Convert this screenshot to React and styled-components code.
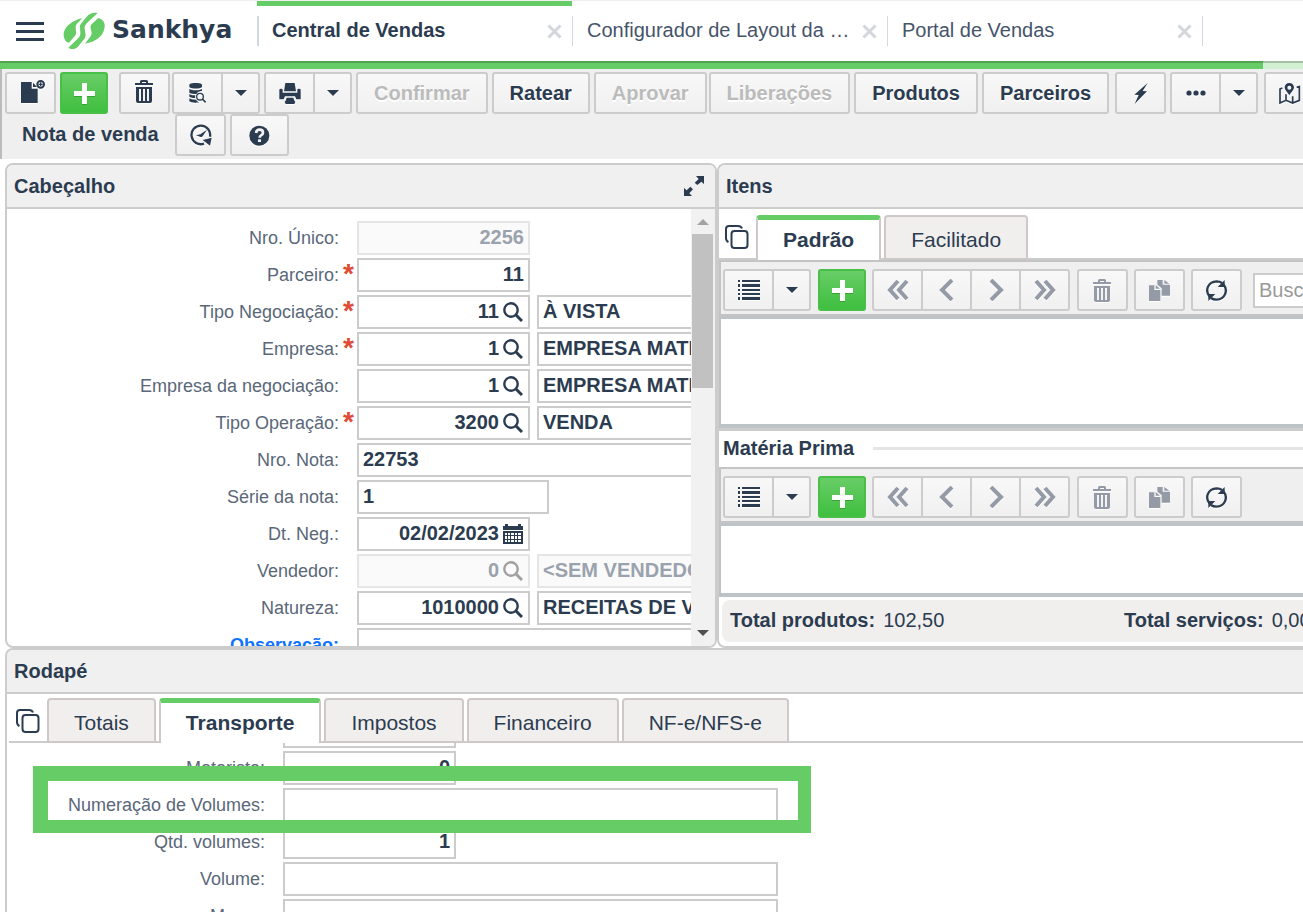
import React, { useState } from 'react';
import styled, { createGlobalStyle, css } from 'styled-components';

const GlobalStyle = createGlobalStyle`
  * {
    box-sizing: border-box;
  }

  body {
    margin: 0;
    background: #fff;
    color: #2c3c50;
    font-family: 'Liberation Sans', Arial, sans-serif;
    font-size: 20px;
    overflow: hidden;
  }

  button,
  input {
    font: inherit;
    color: inherit;
  }
`;

const Page = styled.div`
  display: flex;
  flex-direction: column;
  height: 100vh;
  overflow: hidden;
`;

/* ---------- top bar ---------- */

const TopBar = styled.header`
  display: flex;
  align-items: flex-start;
  height: 61px;
  border-top: 1px solid #f0f0f0;
`;

const Brand = styled.div`
  display: flex;
  align-items: center;
  flex: none;
  width: 257px;
  height: 60px;
  padding-left: 16px;
`;

const MenuButton = styled.button`
  display: flex;
  padding: 0;
  margin-right: 19px;
  border: 0;
  background: none;
`;

const LogoText = styled.span`
  margin: 0 0 2px 7px;
  font-family: 'DejaVu Sans', sans-serif;
  font-size: 25px;
  font-weight: bold;
  line-height: 30px;
`;

const WindowTab = styled.div`
  display: flex;
  align-items: center;
  flex: none;
  width: 315px;
  height: 60px;
  border-top: 5px solid ${({ $active }) => ($active ? '#66cc66' : 'transparent')};
  padding-bottom: 5px;
`;

const WindowTabInner = styled.div`
  display: flex;
  align-items: center;
  justify-content: space-between;
  flex: 1;
  height: 30px;
  padding: 0 10px 0 ${({ $active }) => ($active ? 13 : 14)}px;
  border-left: ${({ $active }) => ($active ? 2 : 1)}px solid #d2d7e2;
`;

const WindowTabLink = styled.a`
  margin-bottom: 2px;
  color: ${({ $active }) => ($active ? '#2c3c50' : '#46546a')};
  font-weight: ${({ $active }) => ($active ? 'bold' : 'normal')};
  line-height: 24px;
  text-decoration: none;
  white-space: nowrap;
`;

const CloseButton = styled.button`
  display: flex;
  padding: 0;
  border: 0;
  background: none;
`;

const TabsEnd = styled.div`
  width: 1px;
  height: 30px;
  margin-top: 15px;
  background: #d2d7e2;
`;

const ProgressTrack = styled.div`
  display: flex;
  flex: none;
  height: 8px;
  padding-right: 40px;
  border-top: 2px solid #a7c0a7;
  background: #d1f0d1;
`;

const ProgressFill = styled.div`
  flex: 1;
  margin-top: -2px;
  border-top: 2px solid #53a353;
  background: #66cc66;
`;

/* ---------- buttons ---------- */

const Button = styled.button`
  display: flex;
  align-items: center;
  justify-content: center;
  flex: none;
  min-width: ${({ $size }) => (({ icon: 51, add: 48, help: 59, caret: 39 })[$size] || 0)}px;
  height: 42px;
  margin: 0 ${({ $after = 4 }) => $after}px 0 0;
  padding: ${({ $size }) => ($size ? '0' : '0 16px')};
  border: 2px solid #ccc;
  border-radius: 3px;
  background: linear-gradient(#f8f8f8, #f0f0f0);
  color: #2c3c50;
  font-weight: bold;
  text-shadow: 0 2px 0 #fff;
  white-space: nowrap;

  svg {
    filter: drop-shadow(0 1px 0 #fff);
  }

  &:disabled {
    color: ${({ $size }) => ($size ? '#949ba6' : '#bbb')};
  }

  ${({ $size }) =>
    $size === 'add' &&
    css`
      border-color: #48c048;
      background: linear-gradient(#68cd67, #3fbf3f);
      color: #fff;

      svg {
        filter: drop-shadow(0 1px 0 #37a337);
      }
    `}
`;

const ButtonGroup = styled.div`
  display: flex;
  flex: none;
  margin-right: ${({ $after = 4 }) => $after}px;

  ${Button} {
    margin-right: 0;
  }

  ${Button} + ${Button} {
    margin-left: -2px;
    border-top-left-radius: 0;
    border-bottom-left-radius: 0;
  }
`;

const MainToolbar = styled.div`
  flex: none;
  height: 90px;
  margin-bottom: 4px;
  padding: 3px 0 0 3px;
  border-left: 2px solid #bbb;
  background: #efefef;
  overflow: hidden;
`;

const ToolbarLine = styled.div`
  display: flex;
  align-items: center;
`;

const DocumentKind = styled.h1`
  width: 170px;
  margin: 0;
  padding: 0 0 2px 17px;
  font-size: 20px;
  line-height: 24px;
`;

/* ---------- panels ---------- */

const Workspace = styled.main`
  display: grid;
  grid-template-columns: minmax(0, 356fr) minmax(0, 293fr);
  grid-template-rows: minmax(0, 485fr) minmax(0, 264fr);
  flex: 1;
  min-height: 0;
  padding-left: 5px;
`;

const Panel = styled.section`
  display: flex;
  flex-direction: column;
  min-width: 0;
  border: 2px solid #ccc;
  border-radius: 8px;
  overflow: hidden;

  ${({ $open }) =>
    $open &&
    css`
      border-right: 0;
      border-top-right-radius: 0;
      border-bottom-right-radius: 0;
    `}

  ${({ $wide }) =>
    $wide &&
    css`
      grid-column: 1 / -1;
      border-bottom: 0;
      border-bottom-left-radius: 0;
    `}
`;

const PanelHeader = styled.div`
  display: flex;
  align-items: center;
  justify-content: space-between;
  flex: none;
  height: 44px;
  padding: 0 11px 0 7px;
  border-bottom: 2px solid #ccc;
  background: #f0f0f0;
`;

const PanelTitle = styled.h2`
  margin: 0;
  font-size: 20px;
  line-height: 24px;
`;

const PlainButton = styled.button`
  display: flex;
  padding: 0;
  border: 0;
  background: none;
`;

const PanelBody = styled.div`
  display: flex;
  flex: 1;
  min-height: 0;
`;

/* ---------- forms ---------- */

const Form = styled.form`
  flex: 1;
  min-width: 0;
  padding-top: ${({ $top }) => $top}px;
  overflow: hidden;
`;

const ScrolledRows = styled.div`
  margin-top: -29px;
`;

const Row = styled.div`
  position: relative;
  display: flex;
  align-items: center;
  height: 34px;
  margin-bottom: 3px;
`;

const Label = styled.label`
  flex: none;
  width: ${({ $width }) => $width}px;
  color: ${({ $link }) => ($link ? '#0f73ff' : '#5a6779')};
  font-size: 18px;
  font-weight: ${({ $link }) => ($link ? 'bold' : 'normal')};
  line-height: 22px;
  text-align: right;
  white-space: nowrap;
`;

const EmptyLabel = styled.span`
  flex: none;
  width: 276px;
`;

const Mark = styled.span`
  flex: none;
  width: 18px;
  height: 34px;
  padding-left: 4px;
  color: #e04b35;
  font-size: 28px;
  font-weight: bold;
  line-height: 32px;
`;

const widths = { short: 173, medium: 192, long: 495, text: 400 };

const Box = styled.div`
  display: flex;
  align-items: center;
  flex: none;
  width: ${({ $size }) => widths[$size]}px;
  height: 34px;
  margin-right: 7px;
  padding: 0 4px;
  border: 2px solid ${({ $off }) => ($off ? '#e5e5e5' : '#ccc')};
  background: ${({ $off }) => ($off ? '#fafafa' : '#fff')};
  color: ${({ $off }) => ($off ? '#9aa2ad' : '#2c3c50')};
`;

const Value = styled.input`
  flex: 1;
  min-width: 0;
  height: 26px;
  margin-bottom: 2px;
  padding: 0;
  border: 0;
  outline: 0;
  background: none;
  font-weight: bold;
  text-align: ${({ $right }) => ($right ? 'right' : 'left')};
`;

const BoxButton = styled(PlainButton)`
  margin: 0 1px 0 4px;
  color: ${({ disabled }) => (disabled ? '#a0a0a0' : '#2c3c50')};
`;

const Highlight = styled.div`
  position: absolute;
  z-index: 1;
  top: -22px;
  left: 26px;
  width: 778px;
  height: 67px;
  border: solid #66cc66;
  border-width: 15px 13px 13px 15px;
  pointer-events: none;
`;

const Scrollbar = styled.div`
  display: flex;
  flex-direction: column;
  align-items: center;
  flex: none;
  width: 24px;
  padding: 10px 1px 10px 0;
  background: #f1f1f1;
`;

const ScrollThumb = styled.div`
  flex: none;
  width: 21px;
  height: 37%;
  margin: 9px 0 auto;
  background: #c1c1c1;
`;

/* ---------- tabs ---------- */

const TabBar = styled.div`
  display: flex;
  align-items: center;
  flex: none;
  height: ${({ $height }) => $height}px;
  margin-left: ${({ $inset = 0 }) => $inset}px;
  padding-left: ${({ $start }) => $start}px;
  box-shadow: inset 0 -2px 0 #ccc;
`;

const Tab = styled.button`
  align-self: flex-end;
  height: 45px;
  margin: 0 3px 0 0;
  padding: 5px 25px 0;
  border: 2px solid #cfc8c8;
  border-radius: 4px 4px 0 0;
  background: #f1efee;
  font-size: 21px;
  white-space: nowrap;

  ${({ $active }) =>
    $active &&
    css`
      padding-top: 0;
      border-top: 5px solid #66cc66;
      border-bottom: 0;
      background: #fff;
      font-weight: bold;
    `}
`;

const TabsIcon = styled(PlainButton)`
  margin: 4px 7px 0 0;
`;

/* ---------- items ---------- */

const GridToolbar = styled.div`
  display: flex;
  align-items: center;
  flex: none;
  height: 56px;
  padding: 4px 0 0 2px;
  border: solid #c4c4c4;
  border-width: 2px 0 2px 2px;
  background: #efefef;
  overflow: hidden;
`;

const GridArea = styled.div`
  flex: 1 1 ${({ $basis }) => $basis}px;
  border: solid #bdc3c7;
  border-width: 3px 0 4px 2px;
  background: #fff;
`;

const Search = styled.input`
  flex: none;
  width: 200px;
  height: 35px;
  margin-left: 7px;
  padding: 0 4px;
  border: 2px solid #ccc;
  background: #fff;

  &::placeholder {
    color: #999;
    opacity: 1;
  }
`;

const Legend = styled.div`
  display: flex;
  align-items: center;
  flex: none;
  gap: 19px;
  height: 39px;
  padding: 0 0 2px 4px;
  border-top: 3px solid #ccc;
`;

const LegendTitle = styled.h3`
  margin: 0;
  font-size: 20px;
  line-height: 24px;
`;

const LegendRule = styled.div`
  flex: 1;
  height: 3px;
  background: #e5e5e5;
`;

const Totals = styled.dl`
  display: flex;
  align-items: center;
  flex: none;
  height: 42px;
  margin: 3px 0 4px 3px;
  padding: 0 0 2px 8px;
  border-radius: 8px 0 0 8px;
  background: #f1efee;
  white-space: nowrap;
  overflow: hidden;
`;

const Total = styled.div`
  display: flex;
  flex: 0 0 394px;
  gap: 8px;

  dt {
    font-weight: bold;
  }

  dd {
    margin: 0;
  }
`;

/* ---------- icons ---------- */

const Svg = ({ w, h, box, children }) => (
  <svg width={w} height={h} viewBox={box || `0 0 ${w} ${h}`} fill="currentColor" aria-hidden="true">
    {children}
  </svg>
);

const MenuIcon = () => (
  <Svg w={28} h={20}>
    <path d="M0 1h28v3H0zM0 9h28v3H0zM0 17h28v3H0z" />
  </Svg>
);

const LogoIcon = () => (
  <svg width="42" height="38" viewBox="0 0 126 114" fill="#66cc66" aria-hidden="true">
    <path d="M58 18C22 26 0 50 2 70c1 14 8 22 16 22l14-16c6-6 8-10 7-16l-1-14c0-6 2-9 6-13z" />
    <path d="M104 3C92 0 79 4 71 14L55 34c-4 5-5 8-4 14l1 12c1 8-1 12-5 17l-31 30c8 6 21 5 29-3l16-20c6-6 8-12 6-20l-2-14c-1-6 1-10 6-16z" />
    <path d="M106 18c15 4 22 16 18 32-5 24-27 39-58 45l13-17c6-8 8-12 6-20l-2-10c-1-6 1-10 6-14z" />
  </svg>
);

const CloseIcon = () => (
  <Svg w={15} h={15}>
    <path d="M1.500 1.500l12 12M13.500 1.500l-12 12" stroke="#d3d6dc" strokeWidth="3" />
  </Svg>
);

const FileIcon = () => (
  <Svg w={28} h={27} box="-12 0 84 81">
    <path d="M0 6h32v20h18v43H0zM36 8l12 13H36z" />
    <circle cx="59" cy="13" r="10" fill="#fff" stroke="currentColor" strokeWidth="6" />
    <path d="M57 7h4v12h-4zM53 11h12v4H53z" />
  </Svg>
);

const PlusIcon = () => (
  <Svg w={21} h={21}>
    <path d="M8 0h5v8h8v5h-8v8H8v-8H0V8h8z" />
  </Svg>
);

const TrashIcon = ({ tall }) => (
  <Svg w={19} h={tall ? 26 : 23}>
    <path d="M0 3h18v2H0zM5 3V1.500Q5 0 6.500 0h5Q13 0 13 1.500V3h-2V2H7v1z" />
    <path fillRule="evenodd" d="M1 7h16v14q0 2-2 2H3q-2 0-2-2zM4 9v12h2V9zM8 9v12h2V9zM12 9v12h2V9z" />
  </Svg>
);

const DatabaseIcon = () => (
  <Svg w={17} h={20} box="0 0 51 60">
    <path d="M1 5C4-2 36-2 39 5v7c-6 6-32 6-38 0zM1 18c8 5 30 5 38 0v6c-8 0-14 3-17 9-8 0-16-1-21-4zM1 33c5 4 13 4 18 4-1 3-1 5 0 8-8 0-14-2-18-4zM1 46c6 4 14 4 20 4 3 4 5 6 10 8-12 3-26 1-30-3z" />
    <circle cx="33" cy="41" r="10" fill="none" stroke="currentColor" strokeWidth="4" />
    <path d="M40 48l10 10" stroke="currentColor" strokeWidth="5" />
  </Svg>
);

const CaretIcon = () => (
  <Svg w={12} h={6}>
    <path d="M0 0h12L6 6z" />
  </Svg>
);

const PrintIcon = () => (
  <Svg w={22} h={21} box="0 0 66 63">
    <path d="M19 0h28l4 25H15zM1 20q0-3 5-3t5 3v9h44v-9q0-3 5-3t5 3v29H52l-4-9H18l-4 9H1z" />
    <path d="M20 53l3-9h20l3 9 3 3-3 7H20l-3-7z" />
  </Svg>
);

const BoltIcon = () => (
  <Svg w={14} h={21} box="0 0 42 63">
    <path d="M41 0L1 35l13 1L2 63l37-38-13-1z" />
  </Svg>
);

const DotsIcon = () => (
  <Svg w={20} h={6}>
    <circle cx="3" cy="3" r="2.600" />
    <circle cx="10" cy="3" r="2.600" />
    <circle cx="17" cy="3" r="2.600" />
  </Svg>
);

const MapIcon = () => (
  <Svg w={22} h={21} box="0 0 66 63">
    <path d="M10 15L3 18v42l18-8 20 8 20-8V11l-8 2M21 34v18M41 40v19" fill="none" stroke="currentColor" strokeWidth="5" />
    <path fillRule="evenodd" d="M31 0c8 0 14 6 14 13 0 8-8 14-14 24-6-10-14-16-14-24C17 6 23 0 31 0zm0 8a6 6 0 100 12 6 6 0 000-12z" />
  </Svg>
);

const ClockIcon = () => (
  <Svg w={22} h={22} box="0 0 66 66">
    <path d="M60 38a28 28 0 10-18 21" fill="none" stroke="currentColor" strokeWidth="7" />
    <path d="M38 48l27-7-5 24z" />
    <path d="M51 17L38 37q-3 4-8 1l-12-4 13-3z" />
  </Svg>
);

const HelpIcon = () => (
  <Svg w={21} h={21} box="0 0 63 63">
    <circle cx="31" cy="32" r="30" />
    <path d="M21 24q1-10 11-10t10 9q0 5-6 8-4 2-4 7" fill="none" stroke="#f4f4f4" strokeWidth="8" />
    <path d="M27 43h9v8h-9z" fill="#f4f4f4" />
  </Svg>
);

const ExpandIcon = () => (
  <Svg w={20} h={20} box="0 0 60 60">
    <path d="M60 0v24l-8-7-12 10-8-7 12-11-8-9zM0 60V36l8 7 11-11 8 8-11 12 8 8z" />
  </Svg>
);

const CardsIcon = () => (
  <Svg w={24} h={24}>
    <path d="M3.500 17Q1 16 1 13V4q0-3 3-3h9q3 0 4 2.500" fill="none" stroke="currentColor" strokeWidth="2" />
    <rect x="6.500" y="6" width="16" height="17" rx="3" fill="none" stroke="currentColor" strokeWidth="2" />
  </Svg>
);

const ListIcon = () => (
  <Svg w={22} h={20}>
    <path d="M0 0h2v2H0zM4 0h18v2H4zM0 4h2v3H0zM4 4h18v3H4zM0 9h2v2H0zM4 9h18v2H4zM0 13h2v2H0zM4 13h18v2H4zM0 17h2v3H0zM4 17h18v3H4z" />
  </Svg>
);

const Chevron = ({ double, right }) => (
  <Svg w={22} h={22}>
    <g transform={right ? 'translate(22 0) scale(-1 1)' : undefined} fill="none" stroke="currentColor" strokeWidth="4">
      {double ? <path d="M11 2L3 11l8 9M20 2l-8 9 8 9" /> : <path d="M16 1L6 11l10 10" />}
    </g>
  </Svg>
);

const PagesIcon = () => (
  <Svg w={21} h={21} box="0 0 63 63">
    <path d="M0 16h16v14h18v33H0zM20 15l13 11H20z" />
    <path d="M25 0h16v14h22v33H38V25L25 14zM46 0l15 11H46z" />
  </Svg>
);

const RefreshIcon = () => (
  <Svg w={21} h={21} box="0 0 63 63">
    <path d="M11 50C-4 32 5 5 32 4q9 0 16 5M52 13c15 18 6 45-21 46q-9 0-16-5" fill="none" stroke="currentColor" strokeWidth="7" />
    <path d="M56 0v21H35zM7 63V42h21z" />
  </Svg>
);

const LensIcon = () => (
  <Svg w={20} h={20}>
    <circle cx="8" cy="8" r="6.700" fill="none" stroke="currentColor" strokeWidth="2.400" />
    <path d="M12.500 12.500L19 19" stroke="currentColor" strokeWidth="3" />
  </Svg>
);

const CalendarIcon = () => (
  <Svg w={20} h={20}>
    <path fillRule="evenodd" d="M0 2h2V0h3v2h10V0h3v2h2v4H0zM0 7h20v13H0zM2 9v2h2V9zM5 9v2h2V9zM8 9v2h3V9zM12 9v2h2V9zM15 9v2h3V9zM2 12v3h2v-3zM5 12v3h2v-3zM8 12v3h3v-3zM12 12v3h2v-3zM15 12v3h3v-3zM2 16v2h2v-2zM5 16v2h2v-2zM8 16v2h3v-2zM12 16v2h2v-2zM15 16v2h3v-2z" />
  </Svg>
);

const ScrollArrow = ({ down }) => (
  <svg width="12" height="6" viewBox="0 0 12 6" fill={down ? '#505050' : '#a3a3a3'} aria-hidden="true">
    <path d={down ? 'M0 0h12L6 6z' : 'M0 6h12L6 0z'} />
  </svg>
);

/* ---------- data ---------- */

const windows = ['Central de Vendas', 'Configurador de Layout da …', 'Portal de Vendas'];

const headerFields = [
  { id: 'nunota', label: 'Nro. Único:', value: '2256', right: true, off: true },
  { id: 'parceiro', label: 'Parceiro:', value: '11', right: true, required: true },
  { id: 'negociacao', label: 'Tipo Negociação:', value: '11', right: true, required: true, lookup: true, text: 'À VISTA' },
  { id: 'empresa', label: 'Empresa:', value: '1', right: true, required: true, lookup: true, text: 'EMPRESA MATRIZ' },
  { id: 'empresaNeg', label: 'Empresa da negociação:', value: '1', right: true, lookup: true, text: 'EMPRESA MATRIZ' },
  { id: 'operacao', label: 'Tipo Operação:', value: '3200', right: true, required: true, lookup: true, text: 'VENDA' },
  { id: 'nota', label: 'Nro. Nota:', value: '22753', size: 'long' },
  { id: 'serie', label: 'Série da nota:', value: '1', size: 'medium' },
  { id: 'data', label: 'Dt. Neg.:', value: '02/02/2023', right: true, date: true },
  { id: 'vendedor', label: 'Vendedor:', value: '0', right: true, lookup: true, off: true, text: '<SEM VENDEDOR>' },
  { id: 'natureza', label: 'Natureza:', value: '1010000', right: true, lookup: true, text: 'RECEITAS DE VENDAS' },
  { id: 'observacao', label: 'Observação:', value: '', size: 'long', link: true },
];

const footerFields = [
  { id: 'motorista', label: 'Motorista:', value: '0', right: true },
  { id: 'numeracao', label: 'Numeração de Volumes:', value: '', size: 'long', highlight: true },
  { id: 'qtdVolumes', label: 'Qtd. volumes:', value: '1', right: true },
  { id: 'volume', label: 'Volume:', value: '', size: 'long' },
  { id: 'marca', label: 'Marca:', value: '', size: 'long' },
];

const footerTabs = ['Totais', 'Transporte', 'Impostos', 'Financeiro', 'NF-e/NFS-e'];

function Field({ field, labelWidth }) {
  return (
    <Row>
      <Label htmlFor={field.id} $width={labelWidth} $link={field.link}>
        {field.label}
      </Label>
      <Mark>{field.required ? '*' : ''}</Mark>
      <Box $size={field.size || 'short'} $off={field.off}>
        <Value id={field.id} defaultValue={field.value} $right={field.right} disabled={field.off} />
        {field.lookup && (
          <BoxButton type="button" aria-label="Pesquisar" disabled={field.off}>
            <LensIcon />
          </BoxButton>
        )}
        {field.date && (
          <BoxButton type="button" aria-label="Abrir calendário">
            <CalendarIcon />
          </BoxButton>
        )}
      </Box>
      {field.text && (
        <Box $size="text" $off={field.off}>
          <Value aria-label={`Descrição ${field.label}`} defaultValue={field.text} disabled={field.off} />
        </Box>
      )}
      {field.highlight && <Highlight />}
    </Row>
  );
}

function ItemsToolbar({ search }) {
  return (
    <GridToolbar>
      <ButtonGroup $after={7}>
        <Button $size="icon" aria-label="Modo de exibição"><ListIcon /></Button>
        <Button $size="caret" aria-label="Mais modos"><CaretIcon /></Button>
      </ButtonGroup>
      <Button $size="add" $after={6} aria-label="Adicionar item"><PlusIcon /></Button>
      <ButtonGroup $after={7}>
        <Button $size="icon" disabled aria-label="Primeiro"><Chevron double /></Button>
        <Button $size="icon" disabled aria-label="Anterior"><Chevron /></Button>
        <Button $size="icon" disabled aria-label="Próximo"><Chevron right /></Button>
        <Button $size="icon" disabled aria-label="Último"><Chevron double right /></Button>
      </ButtonGroup>
      <Button $size="icon" $after={6} disabled aria-label="Excluir item"><TrashIcon /></Button>
      <Button $size="icon" $after={6} disabled aria-label="Duplicar item"><PagesIcon /></Button>
      <Button $size="icon" aria-label="Atualizar"><RefreshIcon /></Button>
      {search && <Search type="text" placeholder="Buscar" aria-label="Buscar" />}
    </GridToolbar>
  );
}

function App() {
  const [itemTab, setItemTab] = useState('Padrão');
  const [footerTab, setFooterTab] = useState('Transporte');

  return (
    <>
      <GlobalStyle />
      <Page>
        <TopBar>
          <Brand>
            <MenuButton aria-label="Menu"><MenuIcon /></MenuButton>
            <LogoIcon />
            <LogoText>Sankhya</LogoText>
          </Brand>
          {windows.map((title, i) => (
            <WindowTab key={title} $active={i === 0}>
              <WindowTabInner $active={i === 0}>
                <WindowTabLink href="#" $active={i === 0}>{title}</WindowTabLink>
                <CloseButton aria-label={`Fechar ${title}`}><CloseIcon /></CloseButton>
              </WindowTabInner>
            </WindowTab>
          ))}
          <TabsEnd />
        </TopBar>
        <ProgressTrack>
          <ProgressFill />
        </ProgressTrack>

        <MainToolbar>
          <ToolbarLine>
            <Button $size="icon" aria-label="Nova nota"><FileIcon /></Button>
            <Button $size="add" $after={11} aria-label="Adicionar"><PlusIcon /></Button>
            <Button $size="icon" $after={2} aria-label="Excluir"><TrashIcon tall /></Button>
            <ButtonGroup>
              <Button $size="icon" aria-label="Consultar"><DatabaseIcon /></Button>
              <Button $size="caret" aria-label="Mais consultas"><CaretIcon /></Button>
            </ButtonGroup>
            <ButtonGroup>
              <Button $size="icon" aria-label="Imprimir"><PrintIcon /></Button>
              <Button $size="caret" aria-label="Mais impressões"><CaretIcon /></Button>
            </ButtonGroup>
            <Button disabled>Confirmar</Button>
            <Button>Ratear</Button>
            <Button disabled $after={2}>Aprovar</Button>
            <Button disabled>Liberações</Button>
            <Button>Produtos</Button>
            <Button $after={6}>Parceiros</Button>
            <Button $size="icon" aria-label="Ações rápidas"><BoltIcon /></Button>
            <ButtonGroup $after={6}>
              <Button $size="icon" aria-label="Outras opções"><DotsIcon /></Button>
              <Button $size="caret" aria-label="Mais opções"><CaretIcon /></Button>
            </ButtonGroup>
            <Button $size="icon" aria-label="Mapa"><MapIcon /></Button>
          </ToolbarLine>
          <ToolbarLine>
            <DocumentKind>Nota de venda</DocumentKind>
            <Button $size="icon" aria-label="Histórico"><ClockIcon /></Button>
            <Button $size="help" aria-label="Ajuda"><HelpIcon /></Button>
          </ToolbarLine>
        </MainToolbar>

        <Workspace>
          <Panel>
            <PanelHeader>
              <PanelTitle>Cabeçalho</PanelTitle>
              <PlainButton aria-label="Expandir"><ExpandIcon /></PlainButton>
            </PanelHeader>
            <PanelBody>
              <Form $top={12}>
                {headerFields.map((field) => (
                  <Field key={field.id} field={field} labelWidth={332} />
                ))}
              </Form>
              <Scrollbar>
                <ScrollArrow />
                <ScrollThumb />
                <ScrollArrow down />
              </Scrollbar>
            </PanelBody>
          </Panel>

          <Panel $open>
            <PanelHeader>
              <PanelTitle>Itens</PanelTitle>
            </PanelHeader>
            <TabBar $height={51} $start={6}>
              <TabsIcon aria-label="Abas"><CardsIcon /></TabsIcon>
              {['Padrão', 'Facilitado'].map((tab) => (
                <Tab key={tab} $active={tab === itemTab} onClick={() => setItemTab(tab)}>{tab}</Tab>
              ))}
            </TabBar>
            <ItemsToolbar search />
            <GridArea $basis={112} />
            <Legend>
              <LegendTitle>Matéria Prima</LegendTitle>
              <LegendRule />
            </Legend>
            <ItemsToolbar />
            <GridArea $basis={74} />
            <Totals>
              <Total>
                <dt>Total produtos:</dt>
                <dd>102,50</dd>
              </Total>
              <Total>
                <dt>Total serviços:</dt>
                <dd>0,00</dd>
              </Total>
            </Totals>
          </Panel>

          <Panel $open $wide>
            <PanelHeader>
              <PanelTitle>Rodapé</PanelTitle>
            </PanelHeader>
            <TabBar $height={49} $start={7} $inset={2}>
              <TabsIcon aria-label="Abas"><CardsIcon /></TabsIcon>
              {footerTabs.map((tab) => (
                <Tab key={tab} $active={tab === footerTab} onClick={() => setFooterTab(tab)}>{tab}</Tab>
              ))}
            </TabBar>
            <PanelBody>
              <Form $top={0}>
                <ScrolledRows>
                  <Row>
                    <EmptyLabel />
                    <Box $size="short">
                      <Value aria-label="Veículo" $right />
                    </Box>
                  </Row>
                  {footerFields.map((field) => (
                    <Field key={field.id} field={field} labelWidth={258} />
                  ))}
                </ScrolledRows>
              </Form>
            </PanelBody>
          </Panel>
        </Workspace>
      </Page>
    </>
  );
}

export default App;
